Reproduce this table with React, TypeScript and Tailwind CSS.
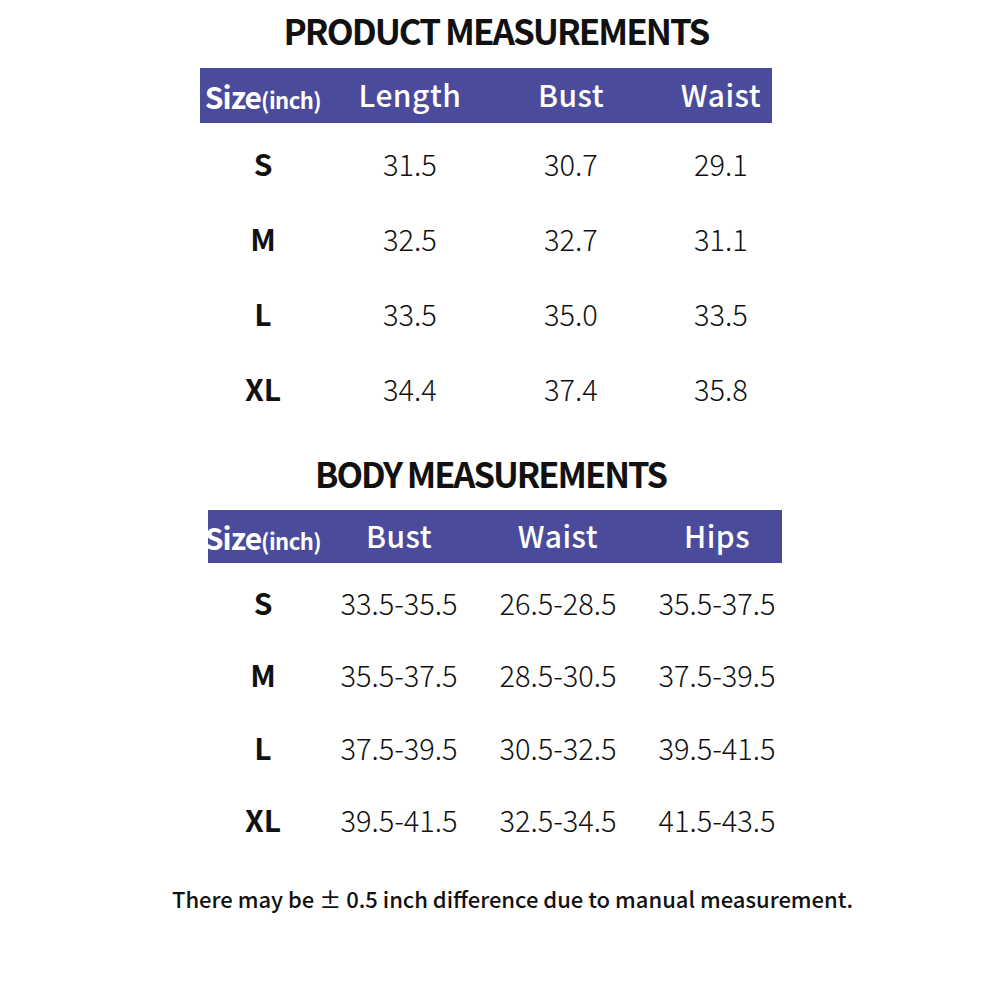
const font = "font-['Noto_Sans_CJK_SC','Noto_Sans',sans-serif]";

const product = [
  ["S", "31.5", "30.7", "29.1"],
  ["M", "32.5", "32.7", "31.1"],
  ["L", "33.5", "35.0", "33.5"],
  ["XL", "34.4", "37.4", "35.8"],
];

const body = [
  ["S", "33.5-35.5", "26.5-28.5", "35.5-37.5"],
  ["M", "35.5-37.5", "28.5-30.5", "37.5-39.5"],
  ["L", "37.5-39.5", "30.5-32.5", "39.5-41.5"],
  ["XL", "39.5-41.5", "32.5-34.5", "41.5-43.5"],
];

function SizeLabel() {
  return (
    <span className="font-bold text-[30px] leading-none tracking-[-1px]">
      Size<span className="text-[22px] font-semibold tracking-[-0.5px]">(inch)</span>
    </span>
  );
}

export default function App() {
  return (
    <div className={`${font} w-[1000px] h-[1000px] bg-white text-[#111] flex flex-col`}>
      {/* product */}
      <h1 className="mt-[10px] h-[40px] text-center text-[35px] leading-[40px] font-bold tracking-[-2px] ml-[-8px]">
        PRODUCT MEASUREMENTS
      </h1>
      <div className="ml-[200px] mt-[18px] w-[572px]">
        <div className="grid grid-cols-[126px_168px_154px_146px] h-[55px] items-center bg-[#4b4b9b] text-white">
          <div className="flex justify-center"><SizeLabel /></div>
          <div className="flex justify-center text-[30px] font-medium leading-none tracking-[0.5px] -mt-[3px]">Length</div>
          <div className="flex justify-center text-[30px] font-medium leading-none tracking-[0.5px] -mt-[3px]">Bust</div>
          <div className="flex justify-center text-[30px] font-medium leading-none tracking-[0.5px] -mt-[3px]">Waist</div>
        </div>
        <div className="pt-[3px]">
          {product.map((r) => (
            <div key={r[0]} className="grid grid-cols-[126px_168px_154px_146px] h-[75px] items-center">
              <div className="flex justify-center text-[30px] font-bold">{r[0]}</div>
              <div className="flex justify-center text-[29px] font-light">{r[1]}</div>
              <div className="flex justify-center text-[29px] font-light">{r[2]}</div>
              <div className="flex justify-center text-[29px] font-light">{r[3]}</div>
            </div>
          ))}
        </div>
      </div>

      {/* body */}
      <h2 className="mt-[27px] h-[40px] text-center text-[34.5px] leading-[40px] font-bold tracking-[-2px] ml-[-19px]">
        BODY MEASUREMENTS
      </h2>
      <div className="ml-[208px] mt-[17px] w-[574px]">
        <div className="grid grid-cols-[110px_162px_156px_162px] h-[53px] items-center bg-[#4b4b9b] text-white">
          <div className="flex justify-center"><SizeLabel /></div>
          <div className="flex justify-center text-[30px] font-medium leading-none tracking-[0.5px] -mt-[3px]">Bust</div>
          <div className="flex justify-center text-[30px] font-medium leading-none tracking-[0.5px] -mt-[3px]">Waist</div>
          <div className="flex justify-center text-[30px] font-medium leading-none tracking-[0.5px] -mt-[3px]">Hips</div>
        </div>
        <div className="pt-[3px]">
          {body.map((r) => (
            <div key={r[0]} className="grid grid-cols-[110px_162px_156px_162px] h-[72.5px] items-center">
              <div className="flex justify-center text-[30px] font-bold">{r[0]}</div>
              <div className="flex justify-center text-[29px] font-light">{r[1]}</div>
              <div className="flex justify-center text-[29px] font-light">{r[2]}</div>
              <div className="flex justify-center text-[29px] font-light">{r[3]}</div>
            </div>
          ))}
        </div>
      </div>

      <p className="mt-[26px] ml-[172px] text-[22px] font-medium">
        There may be ± 0.5 inch difference due to manual measurement.
      </p>
    </div>
  );
}
